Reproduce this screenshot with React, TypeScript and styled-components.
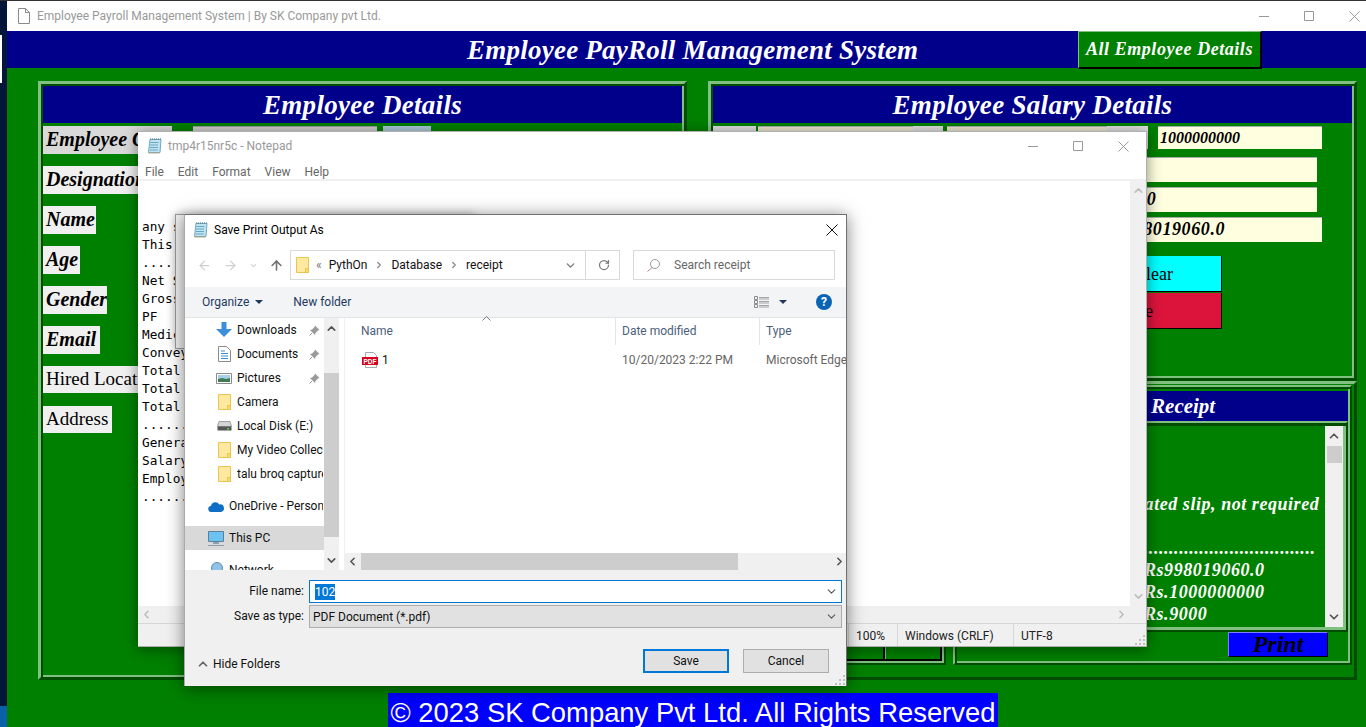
import React from 'react';
import styled, { createGlobalStyle, css } from 'styled-components';
import { ArrowLeft, ArrowRight, ArrowUp, ChevronDown, ChevronLeft, ChevronRight, ChevronUp, RotateCw } from 'lucide-react';

const GlobalStyle = createGlobalStyle`
  html, body {
    margin: 0;
    padding: 0;
    overflow: hidden;
    background: #04153a;
  }
  * {
    box-sizing: border-box;
  }
`;

const SERIF = `"Liberation Serif", "Times New Roman", serif`;
const UI = `Roboto, "Noto Sans", sans-serif`;

// 아이콘
const WinControls = ({ right, color }: { right: number; color: string }) => (
  <Controls $right={right}>
    <svg width="10" height="10" viewBox="0 0 10 10"><path d="M0 5.5h10" stroke={color} fill="none" /></svg>
    <svg width="10" height="10" viewBox="0 0 10 10"><path d="M.5.500h9v9h-9z" stroke={color} fill="none" /></svg>
    <svg width="11" height="11" viewBox="0 0 11 11"><path d="M.5.500l10 10M10.500.5l-10 10" stroke={color} fill="none" /></svg>
  </Controls>
);

const NotepadIcon = () => (
  <svg width="16" height="16" viewBox="0 0 16 16">
    <path d="M3 1.500h11l-1 13H1.500z" fill="#bfe3f0" stroke="#6fa9c0" />
    <path d="M3.500 4.500h8M3 7h8M3 9.500h8M2.800 12h8" stroke="#6aa7c4" />
    <path d="M3 1h11" stroke="#4a6f85" strokeDasharray="1 1" />
    <path d="M1.500 15h11" stroke="#b5a77c" />
  </svg>
);

const FolderIcon = () => (
  <svg width="13" height="16" viewBox="0 0 13 16">
    <path d="M.5.500h12v15H.5z" fill="#ffe9a0" stroke="#e8c64e" />
    <path d="M9.500 11.500h3v4h-3z" fill="#ffd969" stroke="#e8c64e" />
  </svg>
);

const DownloadsIcon = () => (
  <svg width="16" height="16" viewBox="0 0 16 16">
    <path d="M5.500 0h5v7H16l-8 8-8-8h5.500z" fill="#3d8fdc" />
  </svg>
);

const DocumentsIcon = () => (
  <svg width="13" height="16" viewBox="0 0 13 16">
    <path d="M.5.500h8l4 4v11H.5z" fill="#fff" stroke="#8a8a8a" />
    <path d="M3 5h4M3 7.500h7M3 10h7M3 12.500h7" stroke="#3d8fdc" />
  </svg>
);

const PicturesIcon = () => (
  <svg width="16" height="13" viewBox="0 0 16 13">
    <path d="M.5 1.500h15v10H.5z" fill="#fff" stroke="#8a8a8a" />
    <path d="M2 3h12v4H2z" fill="#a8cfe8" />
    <path d="M2 7l4-1 4 1 4-1v4H2z" fill="#3f7a55" />
  </svg>
);

const DiskIcon = () => (
  <svg width="15" height="11" viewBox="0 0 15 11">
    <path d="M2 .5h11l1.500 5h-14z" fill="#d4d4d4" stroke="#a0a0a0" />
    <path d="M.5 5.500h14v4h-14z" fill="#555" />
    <path d="M10 7h2v1.500h-2z" fill="#4fd04f" />
  </svg>
);

const OneDriveIcon = () => (
  <svg width="16" height="11" viewBox="0 0 16 11">
    <path d="M3.500 11a3 3 0 0 1-.5-6 4.500 4.500 0 0 1 8.300-1.500A3.500 3.500 0 0 1 13 11z" fill="#0f6fc6" />
  </svg>
);

const MonitorIcon = () => (
  <svg width="16" height="15" viewBox="0 0 16 15">
    <path d="M.5.500h15v10H.5z" fill="#6cc3f2" stroke="#5e7f99" />
    <path d="M5 12h6" stroke="#8aa0b2" strokeWidth="2" />
    <path d="M0 14.500h16" stroke="#8aa0b2" />
  </svg>
);

const NetworkIcon = () => (
  <svg width="16" height="16" viewBox="0 0 16 16">
    <circle cx="9" cy="6" r="5.500" fill="#8fc3e8" stroke="#5c8db0" />
    <path d="M0 13h16" stroke="#6a8aa5" strokeWidth="2" />
  </svg>
);

const PinIcon = () => (
  <svg width="11" height="11" viewBox="0 0 11 11">
    <path d="M6 .5l4.500 4.500-1.500.5-2.500 2.500-.5 2-5-5 2-.5L5.500 2z" fill="#9a9a9a" />
    <path d="M3 8L.5 10.500" stroke="#9a9a9a" />
  </svg>
);

const PdfIcon = () => (
  <svg width="16" height="16" viewBox="0 0 16 16">
    <path d="M3.500.5h8l3 3v12h-11z" fill="#fff" stroke="#a8a8a8" />
    <path d="M0 5h16v8H0z" fill="#d8001c" />
    <text x="8" y="11.500" textAnchor="middle" fontSize="6.500" fontWeight="700" fontFamily="Liberation Sans, sans-serif" fill="#fff">PDF</text>
  </svg>
);

const ViewIcon = () => (
  <svg width="16" height="13" viewBox="0 0 16 13">
    <path d="M.5.500h3v3h-3zM.5 4.500h3v3h-3zM.5 8.500h3v3h-3z" fill="none" stroke="#8a8a8a" />
    <path d="M5 1.500h10M5 3h10M5 5.500h10M5 7h10M5 9.500h10M5 11h10" stroke="#a5a5a5" />
  </svg>
);

const Grip = () => (
  <GripMark width="11" height="11" viewBox="0 0 11 11">
    <path d="M8 0h2v2H8zM4 4h2v2H4zM8 4h2v2H8zM0 8h2v2H0zM4 8h2v2H4zM8 8h2v2H8z" fill="#c0c0c0" />
  </GripMark>
);

const NAV_ROWS = [
  { id: 1, name: 'Downloads', icon: <DownloadsIcon />, pin: true },
  { id: 2, name: 'Documents', icon: <DocumentsIcon />, pin: true },
  { id: 3, name: 'Pictures', icon: <PicturesIcon />, pin: true },
  { id: 4, name: 'Camera', icon: <FolderIcon />, pin: false },
  { id: 5, name: 'Local Disk (E:)', icon: <DiskIcon />, pin: false },
  { id: 6, name: 'My Video Collection', icon: <FolderIcon />, pin: false },
  { id: 7, name: 'talu broq capture', icon: <FolderIcon />, pin: false },
];

const ROOT_ROWS = [
  { id: 8, name: 'OneDrive - Personal', icon: <OneDriveIcon />, active: false },
  { id: 9, name: 'This PC', icon: <MonitorIcon />, active: true },
  { id: 10, name: 'Network', icon: <NetworkIcon />, active: false },
];

const EMPLOYEE_LABELS = [
  { id: 1, text: 'Employee Code', bold: true, width: 129, tone: '#d9d9d9' },
  { id: 2, text: 'Designation', bold: true, width: 110, tone: '#f0f0f0' },
  { id: 3, text: 'Name', bold: true, width: 53, tone: '#f0f0f0' },
  { id: 4, text: 'Age', bold: true, width: 37, tone: '#f0f0f0' },
  { id: 5, text: 'Gender', bold: true, width: 64, tone: '#f0f0f0' },
  { id: 6, text: 'Email', bold: true, width: 57, tone: '#f0f0f0' },
  { id: 7, text: 'Hired Location', bold: false, width: 130, tone: '#f0f0f0' },
  { id: 8, text: 'Address', bold: false, width: 69, tone: '#f0f0f0' },
];

const NOTE_LINES = [
  '',
  '',
  'any signature',
  'This is computer generated slip',
  '..........................',
  'Net Salary',
  'Gross Salary',
  'PF',
  'Medical',
  'Conveyance',
  'Total Days',
  'Total Absent',
  'Total Present',
  '..........................',
  'Generated On',
  'Salary Of',
  'Employee Code',
  '..........................',
];

const App = () => {
  return (
    <Screen>
      <GlobalStyle />
      <Strip>
        <StripMark />
        <StripTask />
      </Strip>
      <AppWindow>
        <TitleBar>
          <svg width="12" height="16" viewBox="0 0 12 16">
            <path d="M.5.500h7l4 4v11H.5z" fill="#fff" stroke="#8a8a8a" />
            <path d="M7.500.5v4h4" fill="none" stroke="#8a8a8a" />
          </svg>
          <TitleText>Employee Payroll Management System | By SK Company pvt Ltd.</TitleText>
          <WinControls right={6} color="#999" />
        </TitleBar>
        <Banner>
          <BannerTitle>Employee PayRoll Management System</BannerTitle>
          <AllButton>All Employee Details</AllButton>
        </Banner>
        <Content>
          <Columns>
            <Panel>
              <PanelTitle>Employee Details</PanelTitle>
              <LabelList>
                {EMPLOYEE_LABELS.map((label) => (
                  <LabelRow key={label.id}>
                    <FieldLabel $bold={label.bold} $width={label.width} $tone={label.tone}>
                      {label.text}
                    </FieldLabel>
                    {label.id === 1 && (
                      <>
                        <CodeInput />
                        <SearchKey />
                      </>
                    )}
                  </LabelRow>
                ))}
              </LabelList>
            </Panel>
            <RightColumn>
              <SalaryPanel>
                <PanelTitle>Employee Salary Details</PanelTitle>
                <SalaryForm>
                  <TopRow>
                    <Stub $width={43} />
                    <CreamStub $width={155} />
                    <Stub $width={30} />
                    <CreamStub $width={160} $left={2} />
                    <Stub $width={41} />
                    <SalaryField $width={164} $size={16} $left={8}>1000000000</SalaryField>
                  </TopRow>
                  <FieldRow $right={35}>
                    <SalaryField $width={190} $size={18} />
                  </FieldRow>
                  <FieldRow $right={35}>
                    <SalaryField $width={201} $size={18}>9000</SalaryField>
                  </FieldRow>
                  <FieldRow $right={30}>
                    <SalaryField $width={200} $size={18}>998019060.0</SalaryField>
                  </FieldRow>
                  <Actions>
                    <ActionButton $bg="#00ffff" $pad={48}>Clear</ActionButton>
                    <ActionButton $bg="#dc143c" $pad={68}>Delete</ActionButton>
                  </Actions>
                </SalaryForm>
              </SalaryPanel>
              <LowerPanel>
                <CalcFrame>
                  <CalcKeys>
                    <CalcKey />
                    <CalcKey />
                    <CalcKey />
                  </CalcKeys>
                </CalcFrame>
                <ReceiptFrame>
                  <ReceiptTitle>Salary Receipt</ReceiptTitle>
                  <ReceiptBox>
                    <ReceiptText>
                      <ReceiptLine>&nbsp;</ReceiptLine>
                      <ReceiptLine>&nbsp;</ReceiptLine>
                      <ReceiptLine>&nbsp;</ReceiptLine>
                      <ReceiptLine>This is computer generated slip, not required</ReceiptLine>
                      <ReceiptLine>&nbsp;</ReceiptLine>
                      <ReceiptLine>{'.'.repeat(70)}</ReceiptLine>
                      <ReceiptPair><span>Net Salary</span><span>Rs998019060.0</span></ReceiptPair>
                      <ReceiptPair><span>Gross Salary</span><span>Rs.1000000000</span></ReceiptPair>
                      <ReceiptPair><span>PF</span><span>Rs.9000</span></ReceiptPair>
                    </ReceiptText>
                    <ReceiptScroll>
                      <ChevronUp size={14} strokeWidth={3} color="#555" />
                      <ReceiptThumb />
                      <ChevronDown size={14} strokeWidth={3} color="#555" />
                    </ReceiptScroll>
                  </ReceiptBox>
                  <PrintRow>
                    <PrintButton>Print</PrintButton>
                  </PrintRow>
                </ReceiptFrame>
              </LowerPanel>
            </RightColumn>
          </Columns>
          <Footer>© 2023 SK Company Pvt Ltd. All Rights Reserved</Footer>
        </Content>
      </AppWindow>

      <NotepadWindow>
        <NoteTitleBar>
          <NotepadIcon />
          <NoteTitle>tmp4r15nr5c - Notepad</NoteTitle>
          <WinControls right={17} color="#999" />
        </NoteTitleBar>
        <MenuBar>
          <MenuItem>File</MenuItem>
          <MenuItem>Edit</MenuItem>
          <MenuItem>Format</MenuItem>
          <MenuItem>View</MenuItem>
          <MenuItem>Help</MenuItem>
        </MenuBar>
        <Editor>
          <EditorText>
            {NOTE_LINES.map((line, index) => (
              <NoteLine key={index}>{line || '\u00a0'}</NoteLine>
            ))}
          </EditorText>
          <NoteVScroll>
            <ChevronUp size={13} strokeWidth={3} color="#bdbdbd" />
            <ChevronDown size={13} strokeWidth={3} color="#bdbdbd" />
          </NoteVScroll>
        </Editor>
        <NoteHScroll>
          <ChevronLeft size={13} strokeWidth={3} color="#bdbdbd" />
          <ChevronRight size={13} strokeWidth={3} color="#bdbdbd" />
        </NoteHScroll>
        <StatusBar>
          <StatusCell $width={49}>100%</StatusCell>
          <StatusCell $width={116}>Windows (CRLF)</StatusCell>
          <StatusCell $width={130}>UTF-8</StatusCell>
          <Grip />
        </StatusBar>
      </NotepadWindow>

      {/* 뒤에 겹친 대화상자 */}
      <GhostWindow />

      <SaveDialog>
        <DialogTitleBar>
          <NotepadIcon />
          <DialogTitle>Save Print Output As</DialogTitle>
          <DialogClose>
            <svg width="12" height="12" viewBox="0 0 12 12"><path d="M.5.500l11 11M11.500.5l-11 11" stroke="#111" fill="none" /></svg>
          </DialogClose>
        </DialogTitleBar>
        <NavRow>
          <NavArrows>
            <ArrowLeft size={15} color="#d0d0d0" />
            <ArrowRight size={15} color="#d0d0d0" />
            <ChevronDown size={9} strokeWidth={3} color="#d0d0d0" />
            <ArrowUp size={15} strokeWidth={2.500} color="#707070" />
          </NavArrows>
          <AddressBox>
            <FolderIcon />
            <Crumbs>«</Crumbs>
            <Crumb>PythOn</Crumb>
            <ChevronRight size={10} strokeWidth={3} color="#888" />
            <Crumb>Database</Crumb>
            <ChevronRight size={10} strokeWidth={3} color="#888" />
            <Crumb>receipt</Crumb>
            <AddressEnd>
              <ChevronDown size={13} strokeWidth={2.500} color="#777" />
              <AddressRefresh>
                <RotateCw size={12} strokeWidth={2.500} color="#777" />
              </AddressRefresh>
            </AddressEnd>
          </AddressBox>
          <SearchBox>
            <svg width="13" height="13" viewBox="0 0 13 13">
              <circle cx="8" cy="5" r="4.500" fill="none" stroke="#999" />
              <path d="M5 8.500L.5 12.500" stroke="#b08a8a" fill="none" />
            </svg>
            <SearchText>Search receipt</SearchText>
          </SearchBox>
        </NavRow>
        <Toolbar>
          <ToolText>Organize</ToolText>
          <Caret />
          <NewFolder>New folder</NewFolder>
          <ToolRight>
            <ViewIcon />
            <Caret />
            <HelpBadge>?</HelpBadge>
          </ToolRight>
        </Toolbar>
        <DialogBody>
          <NavPane>
            {NAV_ROWS.map((row) => (
              <NavItem key={row.id} $indent={31}>
                <NavGlyph>{row.icon}</NavGlyph>
                <NavName $width={row.pin ? 72 : 86}>{row.name}</NavName>
                {row.pin && (
                  <PinSlot>
                    <PinIcon />
                  </PinSlot>
                )}
              </NavItem>
            ))}
            {ROOT_ROWS.map((row) => (
              <NavItem key={row.id} $indent={23} $active={row.active} $gap={8}>
                <NavGlyph>{row.icon}</NavGlyph>
                <NavName $width={94}>{row.name}</NavName>
              </NavItem>
            ))}
          </NavPane>
          <NavScroll>
            <ChevronUp size={13} strokeWidth={3} color="#555" />
            <NavThumb />
            <ChevronDown size={13} strokeWidth={3} color="#555" />
          </NavScroll>
          <FilePane>
            <FileHeader>
              <HeaderCell>
                <HeaderName>Name</HeaderName>
                <SortMark>
                  <svg width="9" height="5" viewBox="0 0 9 5"><path d="M.5 4.500l4-4 4 4" fill="none" stroke="#777" /></svg>
                </SortMark>
              </HeaderCell>
              <HeaderCell $divided>Date modified</HeaderCell>
              <HeaderCell $divided>Type</HeaderCell>
            </FileHeader>
            <FileRow>
              <FileName>
                <PdfIcon />
                <span>1</span>
              </FileName>
              <FileMeta>10/20/2023 2:22 PM</FileMeta>
              <FileMeta>Microsoft Edge PDF Document</FileMeta>
            </FileRow>
            <FileScroll>
              <ChevronLeft size={13} strokeWidth={3} color="#555" />
              <FileThumb />
              <ChevronRight size={13} strokeWidth={3} color="#555" />
            </FileScroll>
          </FilePane>
        </DialogBody>
        <DialogBottom>
          <FormGrid>
            <FormLabel>File name:</FormLabel>
            <NameInput>
              <Selected>102</Selected>
              <ChevronDown size={13} color="#555" />
            </NameInput>
            <FormLabel>Save as type:</FormLabel>
            <TypeSelect>
              <span>PDF Document (*.pdf)</span>
              <ChevronDown size={13} color="#555" />
            </TypeSelect>
          </FormGrid>
          <DialogActions>
            <HideGroup>
              <ChevronUp size={14} strokeWidth={3} color="#666" />
              <span>Hide Folders</span>
            </HideGroup>
            <DialogButton $primary>Save</DialogButton>
            <DialogButton>Cancel</DialogButton>
          </DialogActions>
          <Grip />
        </DialogBottom>
      </SaveDialog>
    </Screen>
  );
};

export default App;

// 외곽선: tkinter ridge 모양
const ridge = (outer: number, inner: number) => css`
  border-style: solid;
  border-width: ${outer}px;
  border-color: #80c080 #004d00 #004d00 #80c080;
  padding: ${inner}px;
  box-shadow: inset ${inner}px ${inner}px 0 #004d00, inset -${inner}px -${inner}px 0 #80c080;
`;

const Screen = styled.div`
  position: relative;
  display: flex;
  width: 1366px;
  height: 727px;
  overflow: hidden;
  border-top: 1px solid #333;
`;
const Strip = styled.div`
  display: flex;
  flex-direction: column;
  width: 7px;
  flex: none;
  padding-top: 34px;
  background: #04153a;
`;
const StripMark = styled.div`
  width: 2px;
  height: 48px;
  background: #fff;
`;
const StripTask = styled.div`
  margin-top: auto;
  height: 21px;
  background: #0b60a8;
`;
const AppWindow = styled.div`
  display: flex;
  flex-direction: column;
  flex: 1;
  min-width: 0;
`;
const TitleBar = styled.div`
  display: flex;
  align-items: center;
  height: 30px;
  padding-left: 11px;
  background: #fff;
`;
const TitleText = styled.div`
  margin-left: 7px;
  font: 12px ${UI};
  color: #999;
`;
const Controls = styled.div<{ $right: number }>`
  display: flex;
  align-items: center;
  gap: 35px;
  margin-left: auto;
  margin-right: ${(props) => props.$right}px;
`;
const Banner = styled.header`
  display: flex;
  height: 37px;
  background: #00008b;
  padding-left: 460px;
  padding-right: 104px;
`;
const BannerTitle = styled.h1`
  margin: 0;
  font: italic bold 27px/39px ${SERIF};
  letter-spacing: 0.24px;
  color: #fff;
  white-space: nowrap;
`;
const AllButton = styled.div`
  position: relative;
  margin-left: auto;
  width: 184px;
  height: 38px;
  background: #008000;
  border: 1px solid #80c080;
  border-right: 2px solid #000;
  border-bottom: 2px solid #000;
  font: italic bold 18px/35px ${SERIF};
  letter-spacing: 0.55px;
  color: #fff;
  text-align: center;
  white-space: nowrap;
`;
const Content = styled.main`
  display: flex;
  flex-direction: column;
  flex: 1;
  background: #008000;
  padding: 13px 9px 0 31px;
`;
const Columns = styled.div`
  display: grid;
  grid-template-columns: 649px 649px;
  gap: 21px;
  height: 599px;
`;
const Panel = styled.section`
  ${ridge(3, 2)}
  min-height: 0;
`;
const PanelTitle = styled.h2`
  margin: 0;
  height: 37px;
  background: #00008b;
  font: italic bold 27px/39px ${SERIF};
  letter-spacing: 0.3px;
  color: #fff;
  text-align: center;
  white-space: nowrap;
`;
const LabelList = styled.div`
  display: flex;
  flex-direction: column;
  gap: 12px;
  padding-top: 3px;
`;
const LabelRow = styled.div`
  display: flex;
  height: 28px;
`;
const FieldLabel = styled.div<{ $bold: boolean; $width: number; $tone: string }>`
  width: ${(props) => props.$width}px;
  height: ${(props) => (props.$bold ? 28 : 27)}px;
  padding-left: 3px;
  background: ${(props) => props.$tone};
  color: #000;
  white-space: nowrap;
  overflow: hidden;
  font: ${(props) => (props.$bold ? 'italic bold 20px/26px' : '19px/26px')} ${SERIF};
`;
const CodeInput = styled.div`
  width: 184px;
  height: 24px;
  margin-left: 21px;
  background: #d0d0d0;
  border-top: 1px solid #999;
`;
const SearchKey = styled.div`
  width: 48px;
  height: 24px;
  margin-left: 6px;
  background: #a9c9d8;
`;
const RightColumn = styled.div`
  display: flex;
  flex-direction: column;
`;
const SalaryPanel = styled(Panel)`
  height: 300px;
  flex: none;
`;
const SalaryForm = styled.div`
  display: flex;
  flex-direction: column;
  gap: 5px;
  padding-top: 3px;
`;
const TopRow = styled.div`
  display: flex;
  align-items: flex-start;
  height: 26px;
`;
const Stub = styled.div<{ $width: number }>`
  width: ${(props) => props.$width}px;
  height: 23px;
  background: #e0e0e0;
  margin-right: 2px;
`;
const CreamStub = styled.div<{ $width: number; $left?: number }>`
  width: ${(props) => props.$width}px;
  height: 23px;
  margin-left: ${(props) => props.$left || 0}px;
  background: #eee8d0;
  border-top: 1px solid #aaa;
`;
const FieldRow = styled.div<{ $right: number }>`
  display: flex;
  justify-content: flex-end;
  padding-right: ${(props) => props.$right}px;
`;
const SalaryField = styled.div<{ $width: number; $size: number; $left?: number }>`
  width: ${(props) => props.$width}px;
  height: ${(props) => (props.$size === 16 ? 23 : 25)}px;
  margin-left: ${(props) => props.$left || 0}px;
  padding-left: 2px;
  background: #ffffe0;
  border-top: 1px solid #aaa;
  font: italic bold ${(props) => props.$size}px/22px ${SERIF};
  letter-spacing: ${(props) => (props.$size === 16 ? 0 : 0.6)}px;
  color: #000;
`;
const Actions = styled.div`
  display: flex;
  flex-direction: column;
  gap: 1px;
  margin-top: 9px;
  padding-left: 369px;
  padding-right: 130px;
`;
const ActionButton = styled.div<{ $bg: string; $pad: number }>`
  height: 36px;
  background: ${(props) => props.$bg};
  border-right: 1px solid #000;
  border-bottom: 1px solid #000;
  padding-right: ${(props) => props.$pad}px;
  font: 18px/36px ${SERIF};
  color: #000;
  text-align: right;
`;
const LowerPanel = styled.section`
  ${ridge(3, 1)}
  display: grid;
  grid-template-columns: 234px 399px;
  gap: 7px;
  height: 299px;
  flex: none;
  box-shadow: none;
`;
const CalcFrame = styled.div`
  ${ridge(2, 2)}
  display: flex;
  flex-direction: column;
  justify-content: flex-end;
  height: 280px;
`;
const CalcKeys = styled.div`
  display: grid;
  grid-template-columns: 1fr 54px 54px;
  height: 40px;
  border-bottom: 2px solid #000;
  border-right: 2px solid #000;
`;
const CalcKey = styled.div`
  border-right: 1px solid #80c080;
  box-shadow: inset -2px 0 0 #000;
  &:last-child {
    border-right: 0;
    box-shadow: none;
  }
`;
const ReceiptFrame = styled.div`
  ${ridge(2, 2)}
  display: flex;
  flex-direction: column;
  height: 280px;
`;
const ReceiptTitle = styled.h3`
  margin: 2px 0 0;
  height: 30px;
  background: #00008b;
  font: italic bold 21px/30px ${SERIF};
  color: #fff;
  text-align: center;
`;
const ReceiptBox = styled.div`
  ${ridge(2, 3)}
  display: flex;
  height: 211px;
  flex: none;
`;
const ReceiptText = styled.div`
  flex: 1;
  min-width: 0;
  overflow: hidden;
  padding: 1px 0 0 0;
  color: #fff;
  font: italic bold 18px/22px ${SERIF};
  letter-spacing: 0.55px;
  white-space: nowrap;
`;
const ReceiptLine = styled.div`
  height: 22px;
`;
const ReceiptPair = styled.div`
  display: grid;
  grid-template-columns: 182px auto;
  height: 22px;
`;
const ReceiptScroll = styled.div`
  display: flex;
  flex-direction: column;
  align-items: center;
  width: 18px;
  background: #f0f0f0;
  padding-top: 3px;
  svg:last-child {
    margin-top: auto;
    margin-bottom: 3px;
  }
`;
const ReceiptThumb = styled.div`
  width: 15px;
  height: 17px;
  margin-top: 3px;
  background: #cdcdcd;
`;
const PrintRow = styled.div`
  display: flex;
  justify-content: flex-end;
  padding-right: 20px;
`;
const PrintButton = styled.div`
  width: 100px;
  height: 25px;
  background: #0000ff;
  border: 1px solid #8080ff;
  border-right-color: #000;
  border-bottom-color: #000;
  font: italic bold 24px/22px ${SERIF};
  color: #000;
  text-align: center;
`;
const Footer = styled.footer`
  align-self: flex-start;
  margin-left: 350px;
  margin-top: 13px;
  width: 610px;
  height: 34px;
  background: #0000ff;
  color: #fff;
  font: 27.4px/40px "Liberation Sans", Arial, sans-serif;
  text-align: center;
  white-space: nowrap;
`;

const NotepadWindow = styled.section`
  position: absolute;
  left: 138px;
  top: 130px;
  width: 1009px;
  height: 516px;
  display: flex;
  flex-direction: column;
  background: #fff;
  border: 1px solid #b0b0b0;
  border-left: 0;
  box-shadow: 0 2px 14px rgba(0, 0, 0, 0.45);
`;
const NoteTitleBar = styled.div`
  display: flex;
  align-items: center;
  flex: none;
  height: 28px;
  padding-left: 9px;
`;
const NoteTitle = styled.div`
  margin-left: 5px;
  font: 12px ${UI};
  color: #999;
`;
const MenuBar = styled.nav`
  display: flex;
  flex: none;
  gap: 14px;
  height: 21px;
  padding: 2px 0 0 7px;
  border-bottom: 2px solid #f0f0f0;
`;
const MenuItem = styled.div`
  font: 12px/20px ${UI};
  color: #666;
`;
const Editor = styled.div`
  display: flex;
  flex: 1;
  min-height: 0;
`;
const EditorText = styled.div`
  flex: 1;
  padding: 1px 0 0 4px;
  overflow: hidden;
`;
const NoteLine = styled.div`
  height: 18px;
  font: 12.75px/18px "DejaVu Sans Mono", "Liberation Mono", monospace;
  color: #000;
  white-space: pre;
`;
const NoteVScroll = styled.div`
  display: flex;
  flex-direction: column;
  align-items: center;
  justify-content: space-between;
  width: 16px;
  padding: 3px 0;
  background: #f0f0f0;
`;
const NoteHScroll = styled.div`
  display: flex;
  align-items: center;
  justify-content: space-between;
  flex: none;
  height: 17px;
  padding: 0 18px 0 2px;
  background: #f0f0f0;
`;
const StatusBar = styled.div`
  position: relative;
  display: flex;
  flex: none;
  height: 23px;
  padding-left: 710px;
  background: #f0f0f0;
  border-top: 1px solid #d7d7d7;
`;
const StatusCell = styled.div<{ $width: number }>`
  width: ${(props) => props.$width}px;
  padding: 3px 0 0 7px;
  border-left: 1px solid #d7d7d7;
  font: 12px/19px ${UI};
  color: #222;
  white-space: nowrap;
`;
const GripMark = styled.svg`
  position: absolute;
  right: 0;
  bottom: 0;
`;

const GhostWindow = styled.div`
  position: absolute;
  left: 175px;
  top: 213px;
  width: 300px;
  height: 135px;
  background: #f2f2f2;
  border: 1px solid #9a9a9a;
  box-shadow: 0 0 8px rgba(0, 0, 0, 0.25);
`;

const SaveDialog = styled.section`
  position: absolute;
  left: 184px;
  top: 213px;
  width: 663px;
  height: 472px;
  display: flex;
  flex-direction: column;
  background: #fff;
  border: 1px solid #707070;
  border-bottom: 0;
  border-left-color: #aaa;
  box-shadow: 0 2px 16px rgba(0, 0, 0, 0.5);
  overflow: hidden;
`;
const DialogTitleBar = styled.div`
  display: flex;
  align-items: center;
  flex: none;
  height: 30px;
  padding-left: 8px;
`;
const DialogTitle = styled.div`
  margin-left: 5px;
  font: 12px ${UI};
  color: #000;
`;
const DialogClose = styled.div`
  display: flex;
  margin-left: auto;
  margin-right: 8px;
`;
const NavRow = styled.div`
  display: grid;
  grid-template-columns: 105px 330px 215px;
  flex: none;
  height: 42px;
  padding-top: 5px;
`;
const NavArrows = styled.div`
  display: flex;
  align-items: center;
  justify-content: space-between;
  height: 30px;
  padding: 0 6px 0 12px;
`;
const AddressBox = styled.div`
  display: flex;
  align-items: center;
  gap: 7px;
  height: 30px;
  padding-left: 5px;
  border: 1px solid #d9d9d9;
`;
const Crumbs = styled.div`
  font: 12px ${UI};
  color: #777;
`;
const Crumb = styled.div`
  font: 12px ${UI};
  color: #111;
`;
const AddressEnd = styled.div`
  display: flex;
  align-items: center;
  gap: 8px;
  height: 100%;
  margin-left: auto;
  padding-right: 9px;
`;
const AddressRefresh = styled.div`
  display: flex;
  align-items: center;
  height: 100%;
  padding-left: 12px;
  border-left: 1px solid #d9d9d9;
`;
const SearchBox = styled.div`
  display: flex;
  align-items: center;
  gap: 14px;
  height: 30px;
  margin-left: 13px;
  padding-left: 13px;
  border: 1px solid #d9d9d9;
`;
const SearchText = styled.div`
  font: 12px ${UI};
  color: #666;
`;
const Toolbar = styled.div`
  display: flex;
  align-items: center;
  flex: none;
  height: 31px;
  padding-left: 17px;
  background: #f3f4f6;
  border-bottom: 1px solid #e3e3e3;
`;
const ToolText = styled.div`
  font: 12px ${UI};
  color: #1e3a5f;
`;
const Caret = styled.div`
  width: 0;
  height: 0;
  margin-left: 6px;
  border-left: 4px solid transparent;
  border-right: 4px solid transparent;
  border-top: 4px solid #1e3a5f;
`;
const NewFolder = styled(ToolText)`
  margin-left: 30px;
`;
const ToolRight = styled.div`
  display: flex;
  align-items: center;
  margin-left: auto;
  padding-right: 14px;
  ${Caret} {
    margin-left: 9px;
    margin-right: 29px;
  }
`;
const HelpBadge = styled.div`
  width: 16px;
  height: 16px;
  border-radius: 50%;
  background: #0a64b4;
  color: #fff;
  font: bold 12px/16px ${UI};
  text-align: center;
`;
const DialogBody = styled.div`
  display: grid;
  grid-template-columns: 139px 15px 1fr;
  flex: none;
  height: 252px;
`;
const NavPane = styled.div`
  overflow: hidden;
  height: 252px;
`;
const NavItem = styled.div<{ $indent: number; $active?: boolean; $gap?: number }>`
  display: flex;
  align-items: center;
  height: 24px;
  margin-top: ${(props) => props.$gap || 0}px;
  padding-left: ${(props) => props.$indent}px;
  background: ${(props) => (props.$active ? '#d9d9d9' : 'transparent')};
  white-space: nowrap;
`;
const NavGlyph = styled.div`
  display: flex;
  align-items: center;
  justify-content: center;
  width: 16px;
  height: 16px;
`;
const NavName = styled.div<{ $width: number }>`
  width: ${(props) => props.$width}px;
  margin-left: 5px;
  overflow: hidden;
  font: 12px ${UI};
  color: #111;
`;
const PinSlot = styled.div`
  display: flex;
`;
const NavScroll = styled.div`
  display: flex;
  flex-direction: column;
  align-items: center;
  padding-top: 4px;
  background: #f0f0f0;
`;
const NavThumb = styled.div`
  width: 15px;
  height: 164px;
  margin-top: 38px;
  margin-bottom: 17px;
  background: #cdcdcd;
`;
const FilePane = styled.div`
  display: flex;
  flex-direction: column;
  margin-left: 5px;
  min-width: 0;
  border-left: 1px solid #f0f0f0;
`;
const FileHeader = styled.div`
  display: grid;
  grid-template-columns: 270px 144px 1fr;
  height: 26px;
`;
const HeaderCell = styled.div<{ $divided?: boolean }>`
  position: relative;
  padding-left: 6px;
  border-left: ${(props) => (props.$divided ? '1px solid #e5e5e5' : '0')};
  font: 12px/27px ${UI};
  color: #4c607a;
`;
const HeaderName = styled.div`
  padding-left: 10px;
`;
const SortMark = styled.div`
  position: absolute;
  top: -2px;
  left: 137px;
  line-height: 0;
`;
const FileRow = styled.div`
  display: grid;
  grid-template-columns: 270px 144px 1fr;
  align-items: center;
  height: 24px;
  margin-top: 4px;
  white-space: nowrap;
  font: 12px ${UI};
`;
const FileName = styled.div`
  display: flex;
  align-items: center;
  gap: 4px;
  padding-left: 17px;
  color: #111;
`;
const FileMeta = styled.div`
  padding-left: 7px;
  color: #666;
`;
const FileScroll = styled.div`
  display: flex;
  align-items: center;
  margin-top: auto;
  height: 17px;
  background: #f0f0f0;
  svg:first-child {
    margin-left: 1px;
  }
`;
const FileThumb = styled.div`
  width: 377px;
  height: 17px;
  margin-left: 2px;
  margin-right: auto;
  background: #cdcdcd;
`;
const DialogBottom = styled.div`
  position: relative;
  flex: 1;
  background: #f0f0f0;
  padding-top: 10px;
`;
const FormGrid = styled.div`
  display: grid;
  grid-template-columns: 124px 533px;
  row-gap: 2px;
`;
const FormLabel = styled.div`
  height: 23px;
  padding-right: 5px;
  text-align: right;
  font: 12px/22px ${UI};
  color: #111;
`;
const NameInput = styled.div`
  display: flex;
  align-items: center;
  justify-content: space-between;
  height: 23px;
  padding: 0 3px 0 5px;
  background: #fff;
  border: 1px solid #0078d7;
`;
const Selected = styled.span`
  background: #0078d7;
  color: #fff;
  font: 12px/16px ${UI};
`;
const TypeSelect = styled.div`
  display: flex;
  align-items: center;
  justify-content: space-between;
  height: 23px;
  padding: 0 3px;
  background: #e1e1e1;
  border: 1px solid #adadad;
  font: 12px ${UI};
  color: #111;
`;
const DialogActions = styled.div`
  display: flex;
  align-items: center;
  gap: 14px;
  height: 24px;
  margin-top: 21px;
  padding-left: 11px;
  padding-right: 17px;
`;
const HideGroup = styled.div`
  display: flex;
  align-items: center;
  gap: 3px;
  margin-top: 5px;
  margin-right: auto;
  font: 12px ${UI};
  color: #111;
`;
const DialogButton = styled.div<{ $primary?: boolean }>`
  width: 86px;
  height: 24px;
  background: #e1e1e1;
  border: ${(props) => (props.$primary ? '2px solid #0078d7' : '1px solid #adadad')};
  font: 12px/${(props) => (props.$primary ? 20 : 22)}px ${UI};
  color: #111;
  text-align: center;
`;
